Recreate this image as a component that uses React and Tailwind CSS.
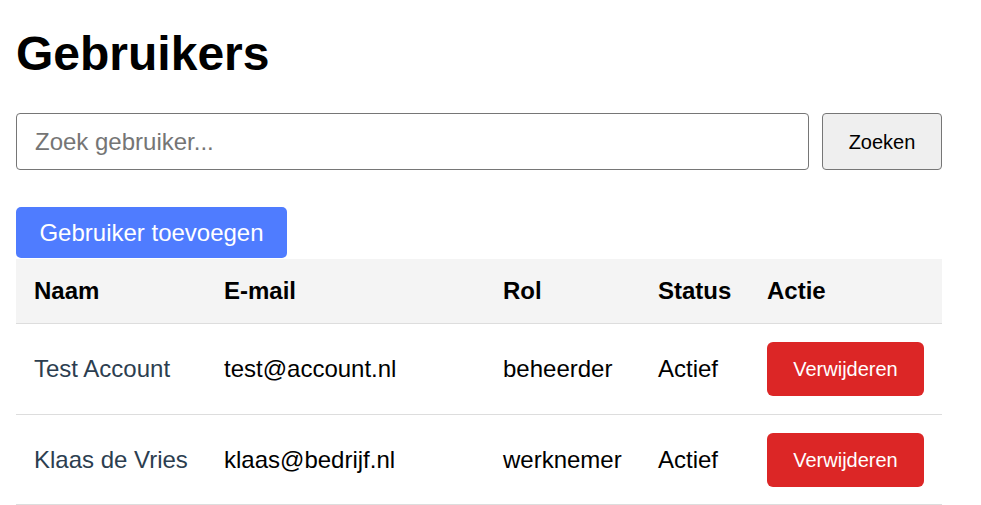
import React from "react";

const rows = [
  { name: "Test Account", email: "test@account.nl", rol: "beheerder", status: "Actief", h: "h-[91px]", pt: "pt-0" },
  { name: "Klaas de Vries", email: "klaas@bedrijf.nl", rol: "werknemer", status: "Actief", h: "h-[90px]", pt: "pt-[2px]" },
];

export default function App() {
  return (
    <div className="min-h-screen bg-white px-4 text-black" style={{ fontFamily: '"Liberation Sans", Arial, sans-serif' }}>
      <div className="w-[926px]">
        <h1 className="m-0 pt-[30px] text-[48px] font-bold leading-[48px]">Gebruikers</h1>
        <div className="mt-[35px] flex gap-[13px]">
          <input
            type="text"
            placeholder="Zoek gebruiker..."
            className="h-[57px] flex-1 rounded-[4px] border border-[#767676] bg-white px-[18px] text-[24px] text-black outline-none placeholder:text-[#757575]"
          />
          <button className="h-[57px] w-[120px] rounded-[4px] border border-[#767676] bg-[#efefef] text-[20px] text-black">
            Zoeken
          </button>
        </div>
        <div className="mt-[37px] flex">
          <button className="h-[51px] w-[271px] rounded-[5px] bg-[#4f7cff] text-[24px] leading-[28px] text-white">
            Gebruiker toevoegen
          </button>
        </div>
        <table className="mt-[1px] w-[926px] table-fixed border-collapse text-[24px]">
          <colgroup>
            <col className="w-[190px]" />
            <col className="w-[279px]" />
            <col className="w-[155px]" />
            <col className="w-[109px]" />
            <col className="w-[193px]" />
          </colgroup>
          <thead>
            <tr className="h-[64px] border-b border-[#dddddd] bg-[#f4f4f4]">
              <th className="px-[18px] pt-[1px] text-left font-bold">Naam</th>
              <th className="px-[18px] pt-[1px] text-left font-bold">E-mail</th>
              <th className="px-[18px] pt-[1px] text-left font-bold">Rol</th>
              <th className="px-[18px] pt-[1px] text-left font-bold">Status</th>
              <th className="px-[18px] pt-[1px] text-left font-bold">Actie</th>
            </tr>
          </thead>
          <tbody>
            {rows.map((r) => (
              <tr key={r.email} className={`${r.h} border-b border-[#dddddd]`}>
                <td className={`${r.pt} px-[18px] whitespace-nowrap text-[#2c3e50]`}>{r.name}</td>
                <td className={`${r.pt} px-[18px] whitespace-nowrap`}>{r.email}</td>
                <td className={`${r.pt} px-[18px] whitespace-nowrap`}>{r.rol}</td>
                <td className={`${r.pt} px-[18px] whitespace-nowrap`}>{r.status}</td>
                <td className={`${r.pt} px-[18px]`}>
                  <button className="h-[54px] w-[157px] rounded-[6px] bg-[#dc2626] text-[20px] text-white">
                    Verwijderen
                  </button>
                </td>
              </tr>
            ))}
          </tbody>
        </table>
      </div>
    </div>
  );
}
